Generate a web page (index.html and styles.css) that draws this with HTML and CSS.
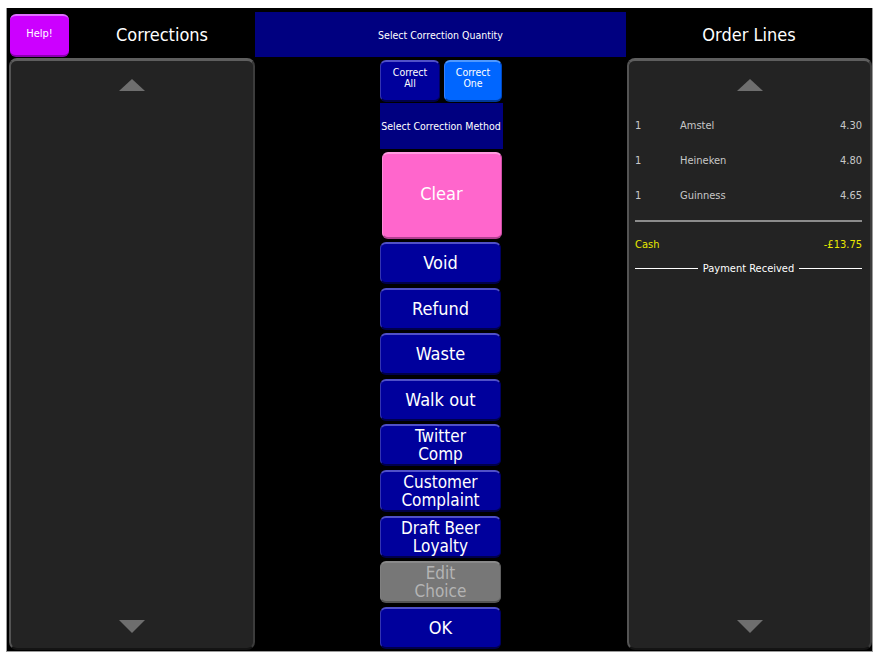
FILE: index.html
```html
<!DOCTYPE html>
<html lang="en">
<head>
    <meta charset="UTF-8">
    <title>Corrections</title>
    <link rel="stylesheet" href="styles.css">
</head>
<body>
    <div class="screen">
        <div class="column side-left">
            <div class="header">
                <button class="help-btn">Help!</button>
                <div class="header-title">Corrections</div>
            </div>
            <div class="panel">
                <div class="arrow-up"></div>
                <div class="panel-body"></div>
                <div class="arrow-down"></div>
            </div>
        </div>

        <div class="column middle">
            <div class="quantity-bar">Select Correction Quantity</div>
            <div class="quantity-row">
                <button class="btn small-btn">Correct<br>All</button>
                <button class="btn small-btn active">Correct<br>One</button>
            </div>
            <div class="method-bar">Select Correction Method</div>
            <button class="btn clear-btn">Clear</button>
            <div class="method-list">
                <button class="btn method-btn">Void</button>
                <button class="btn method-btn">Refund</button>
                <button class="btn method-btn">Waste</button>
                <button class="btn method-btn">Walk out</button>
                <button class="btn method-btn two-line">Twitter<br>Comp</button>
                <button class="btn method-btn two-line">Customer<br>Complaint</button>
                <button class="btn method-btn two-line">Draft Beer<br>Loyalty</button>
                <button class="btn method-btn two-line disabled">Edit<br>Choice</button>
                <button class="btn method-btn">OK</button>
            </div>
        </div>

        <div class="column side-right">
            <div class="header">
                <div class="header-title">Order Lines</div>
            </div>
            <div class="panel">
                <div class="arrow-up"></div>
                <div class="panel-body">
                    <div class="order-list">
                        <div class="order-row">
                            <span class="qty">1</span>
                            <span class="item">Amstel</span>
                            <span class="price">4.30</span>
                        </div>
                        <div class="order-row">
                            <span class="qty">1</span>
                            <span class="item">Heineken</span>
                            <span class="price">4.80</span>
                        </div>
                        <div class="order-row">
                            <span class="qty">1</span>
                            <span class="item">Guinness</span>
                            <span class="price">4.65</span>
                        </div>
                    </div>
                    <div class="separator"></div>
                    <div class="payment-row">
                        <span>Cash</span>
                        <span>-£13.75</span>
                    </div>
                    <div class="payment-note">
                        <span class="rule"></span>
                        <span class="note-text">Payment Received</span>
                        <span class="rule"></span>
                    </div>
                </div>
                <div class="arrow-down"></div>
            </div>
        </div>
    </div>
</body>
</html>
```

FILE: styles.css
```css
body {
    margin: 0;
    background-color: #ffffff;
    font-family: Tahoma, "DejaVu Sans Condensed", "DejaVu Sans", sans-serif;
    color: #ffffff;
}

.screen {
    margin: 8px 0 0 6px;
    width: 865px;
    height: 643px;
    background-color: #000000;
    border-left: 1px solid #9a9a9a;
    border-right: 1px solid #9a9a9a;
    border-bottom: 1px solid #9a9a9a;
    display: flex;
}

.column {
    display: flex;
    flex-direction: column;
}

.side-left {
    width: 248px;
}

.middle {
    width: 371px;
    align-items: center;
}

.side-right {
    width: 246px;
}

/* headers */

.header {
    height: 50px;
    display: flex;
    align-items: center;
}

.header-title {
    flex: 1;
    text-align: center;
    font-size: 18px;
    padding-top: 3px;
}

.side-left .header {
    padding-left: 3px;
}

.help-btn {
    width: 59px;
    height: 43px;
    margin-top: 4px;
    background: #cc00ff;
    border: none;
    border-top: 2px solid #e070ff;
    border-bottom: 2px solid #8a00b0;
    border-radius: 6px;
    color: #ffffff;
    font-family: inherit;
    font-size: 11px;
    padding: 0 0 4px 0;
}

/* side panels */

.panel {
    flex: 1;
    margin-bottom: 1px;
    background-color: #232323;
    border-top: 3px solid #5e5e5e;
    border-left: 2px solid #545454;
    border-right: 2px solid #3c3c3c;
    border-bottom: 2px solid #141414;
    border-radius: 8px;
    display: flex;
    flex-direction: column;
    align-items: center;
}

.side-left .panel {
    margin-left: 2px;
}

.side-right .panel {
    margin-left: 1px;
}

.arrow-up {
    margin-top: 18px;
    width: 0;
    height: 0;
    border-left: 13px solid transparent;
    border-right: 13px solid transparent;
    border-bottom: 12px solid #6e6e6e;
}

.arrow-down {
    margin-bottom: 15px;
    width: 0;
    height: 0;
    border-left: 13px solid transparent;
    border-right: 13px solid transparent;
    border-top: 13px solid #6e6e6e;
}

.panel-body {
    flex: 1;
    align-self: stretch;
    padding: 0 8px 0 6px;
}

/* order lines */

.order-list {
    margin-top: 17px;
}

.order-row {
    height: 35px;
    display: flex;
    align-items: center;
    font-size: 11px;
    color: #c8c8c8;
}

.qty {
    width: 45px;
}

.item {
    flex: 1;
}

.separator {
    margin-top: 7px;
    height: 2px;
    background-color: #8c8c8c;
}

.payment-row {
    margin-top: 12px;
    height: 20px;
    display: flex;
    align-items: center;
    justify-content: space-between;
    font-size: 11px;
    color: #e8e800;
}

.payment-note {
    margin-top: 7px;
    height: 14px;
    display: flex;
    align-items: center;
    font-size: 11px;
}

.rule {
    flex: 1;
    height: 1px;
    background-color: #ffffff;
}

.note-text {
    padding: 0 5px;
}

/* middle column */

.quantity-bar {
    margin-top: 4px;
    width: 371px;
    height: 45px;
    background-color: #000080;
    display: flex;
    align-items: center;
    justify-content: center;
    font-size: 10.5px;
}

.btn {
    font-family: inherit;
    color: #ffffff;
    background-color: #00009c;
    border: none;
    border-top: 2px solid #5050c8;
    border-left: 1px solid #3434b0;
    border-right: 1px solid #000060;
    border-bottom: 2px solid #00004a;
    border-radius: 6px;
    padding: 0;
    line-height: 18px;
}

.quantity-row {
    margin-top: 3px;
    display: flex;
    gap: 4px;
    margin-left: 1px;
}

.small-btn {
    width: 60px;
    height: 42px;
    font-size: 10.5px;
    line-height: 11px;
    padding-bottom: 6px;
}

.small-btn.active {
    width: 58px;
    background-color: #0066ff;
    border-top-color: #4f98ff;
    border-left-color: #3380ff;
    border-right-color: #0048c0;
    border-bottom-color: #003a9c;
}

.method-bar {
    margin-top: 1px;
    width: 123px;
    height: 46px;
    margin-left: 1px;
    background-color: #000080;
    display: flex;
    align-items: center;
    justify-content: center;
    font-size: 10.5px;
    white-space: nowrap;
}

.clear-btn {
    margin-top: 3px;
    margin-left: 2px;
    width: 120px;
    height: 87px;
    font-size: 18px;
    padding-bottom: 4px;
    background-color: #ff66cc;
    border-top-color: #ff9ce0;
    border-left-color: #ff88d8;
    border-right-color: #cc4fa4;
    border-bottom-color: #b04090;
}

.method-list {
    margin-top: 3px;
    display: flex;
    flex-direction: column;
    gap: 3.6px;
}

.method-btn {
    width: 121px;
    height: 42px;
    font-size: 18px;
}

.method-btn.two-line {
    font-size: 17px;
}

.method-btn.disabled {
    background-color: #777777;
    color: #b4b4b4;
    border-top-color: #8a8a8a;
    border-left-color: #808080;
    border-right-color: #606060;
    border-bottom-color: #555555;
}
```
